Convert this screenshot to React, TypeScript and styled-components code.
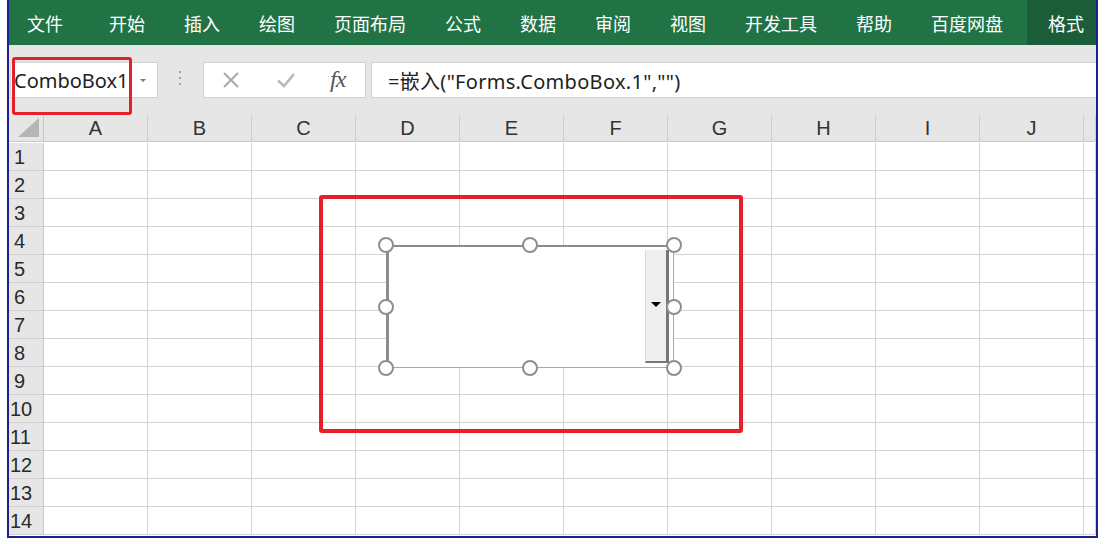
import React from 'react';
import styled, { createGlobalStyle } from 'styled-components';

const GlobalStyle = createGlobalStyle`
  html, body {
    margin: 0;
    padding: 0;
    background: #ffffff;
  }
  body {
    font-family: "Noto Sans", "Noto Sans CJK SC", sans-serif;
  }
`;

const GREEN = '#217346';
const GRID = '#d4d4d4';
const HEAD_BG = '#e6e6e6';

const Frame = styled.div`
  position: relative;
  margin-left: 7px;
  width: 1091px;
  height: 538px;
  box-sizing: border-box;
  border: 2px solid #1f1f8f;
  border-top: none;
  overflow: hidden;
  background: #ffffff;
`;

const Ribbon = styled.div`
  display: flex;
  align-items: stretch;
  gap: 39px;
  height: 45px;
  padding-left: 18px;
  background: ${GREEN};
  font-family: "Noto Sans CJK SC", sans-serif;
`;

const Tab = styled.div<{ $active?: boolean; $first?: boolean }>`
  display: flex;
  align-items: center;
  color: #ffffff;
  font-size: 18px;
  white-space: nowrap;
  margin-right: ${(p) => (p.$first ? '7px' : '0')};
  ${(p) =>
    p.$active &&
    `
    flex: 1;
    margin-left: -15px;
    padding-left: 21px;
    background: #1b5d39;
  `}
`;

const FormulaBar = styled.div`
  display: flex;
  align-items: flex-start;
  height: 70px;
  box-sizing: border-box;
  padding-top: 17px;
  padding-left: 1px;
  background: ${HEAD_BG};
`;

const NameBox = styled.div`
  display: flex;
  align-items: center;
  width: 148px;
  height: 36px;
  box-sizing: border-box;
  padding-left: 3px;
  background: #ffffff;
  border: 1px solid #d2d2d2;
  font-size: 20px;
  color: #222;
`;

const NameText = styled.span`
  flex: 1;
`;

const Caret = styled.span`
  width: 0;
  height: 0;
  margin-right: 11px;
  border-left: 3px solid transparent;
  border-right: 3px solid transparent;
  border-top: 3px solid #777;
`;

const Dots = styled.div`
  display: flex;
  flex-direction: column;
  gap: 4px;
  margin: 9px 22px 0 21px;
  span {
    width: 2px;
    height: 2px;
    background: #a3a3a3;
  }
`;

const FuncBox = styled.div`
  display: flex;
  align-items: center;
  width: 163px;
  height: 36px;
  box-sizing: border-box;
  padding-left: 18px;
  background: #ffffff;
  border: 1px solid #d2d2d2;
`;

const FuncIcon = styled.svg<{ $gap: number }>`
  margin-right: ${(p) => p.$gap}px;
  flex-shrink: 0;
`;

const Fx = styled.span`
  font-family: "Liberation Serif", serif;
  font-style: italic;
  font-size: 24px;
  color: #555;
  letter-spacing: -1px;
  margin-top: -2px;
`;

const FormulaInput = styled.div`
  flex: 1;
  display: flex;
  align-items: center;
  height: 36px;
  margin-left: 5px;
  box-sizing: border-box;
  padding-left: 16px;
  background: #ffffff;
  border: 1px solid #d2d2d2;
  border-right: none;
  font-size: 20px;
  letter-spacing: 0.3px;
  color: #222;
`;

const Grid = styled.div`
  display: grid;
  grid-template-columns: 35px repeat(10, 104px) 1fr;
  grid-auto-rows: 28px;
`;

const Corner = styled.div`
  height: 27px;
  box-sizing: border-box;
  background: ${HEAD_BG};
  border-right: 1px solid #c8c8c8;
  border-bottom: 1px solid #c8c8c8;
  display: flex;
  align-items: flex-end;
  justify-content: flex-end;
  padding: 0 4px 4px 0;
`;

const ColHead = styled.div`
  height: 27px;
  box-sizing: border-box;
  background: ${HEAD_BG};
  border-right: 1px solid #cfcfcf;
  border-bottom: 1px solid #c8c8c8;
  display: flex;
  align-items: center;
  justify-content: center;
  font-family: "Liberation Sans", sans-serif;
  font-size: 20px;
  color: #333;
`;

const RowHead = styled.div`
  box-sizing: border-box;
  background: ${HEAD_BG};
  border-right: 1px solid #c8c8c8;
  border-bottom: 1px solid #cfcfcf;
  display: flex;
  align-items: center;
  padding-left: 1px;
  padding-top: 1px;
  font-family: "Liberation Sans", sans-serif;
  font-size: 20px;
  color: #2a2a2a;
`;

const RowNum = styled.span<{ $two?: boolean }>`
  padding-left: ${(p) => (p.$two ? '0' : '4px')};
`;

const Cell = styled.div`
  box-sizing: border-box;
  border-right: 1px solid ${GRID};
  border-bottom: 1px solid ${GRID};
`;

const Callout = styled.div`
  position: absolute;
  box-sizing: border-box;
  border: 4px solid #e4202b;
  border-radius: 3px;
  pointer-events: none;
`;

const Combo = styled.div`
  position: absolute;
  left: 377px;
  top: 245px;
  width: 288px;
  height: 123px;
`;

const ComboBody = styled.div`
  position: absolute;
  inset: 0 0 0 0;
  box-sizing: border-box;
  background: #ffffff;
  border-top: 2px solid #8c8c8c;
  border-left: 3px solid #8c8c8c;
  border-right: 1px solid #a8a8a8;
  border-bottom: 1px solid #a8a8a8;
`;

const DropButton = styled.div`
  position: absolute;
  top: 3px;
  right: 4px;
  bottom: 4px;
  width: 24px;
  box-sizing: border-box;
  background: #efefef;
  border-left: 1px solid #dcdcdc;
  border-right: 3px solid #767676;
  border-bottom: 2px solid #767676;
  display: flex;
  align-items: center;
  justify-content: center;
  &::after {
    content: '';
    width: 0;
    height: 0;
    margin-top: -2px;
    border-left: 5px solid transparent;
    border-right: 5px solid transparent;
    border-top: 5px solid #000;
  }
`;

const Handle = styled.div<{ $x: number; $y: number }>`
  position: absolute;
  left: ${(p) => p.$x - 8}px;
  top: ${(p) => p.$y - 8}px;
  width: 16px;
  height: 16px;
  box-sizing: border-box;
  border-radius: 50%;
  border: 2px solid #8e8e8e;
  background: #ffffff;
`;

const tabs = ['文件', '开始', '插入', '绘图', '页面布局', '公式', '数据', '审阅', '视图', '开发工具', '帮助', '百度网盘'];
const cols = ['A', 'B', 'C', 'D', 'E', 'F', 'G', 'H', 'I', 'J', ''];
const rows = Array.from({ length: 14 }, (_, i) => i + 1);
const handles: [number, number][] = [
  [0, 0], [144, 0], [288, 0],
  [0, 62], [288, 62],
  [0, 123], [144, 123], [288, 123],
];

const App: React.FC = () => {
  return (
    <>
      <GlobalStyle />
      <Frame>
        <Ribbon>
          {tabs.map((t, i) => (
            <Tab key={t} $first={i === 0}>{t}</Tab>
          ))}
          <Tab $active>格式</Tab>
        </Ribbon>

        <FormulaBar>
          <NameBox>
            <NameText>ComboBox1</NameText>
            <Caret />
          </NameBox>
          <Dots><span /><span /><span /></Dots>
          <FuncBox>
            <FuncIcon $gap={36} width="18" height="18" viewBox="0 0 18 18">
              <path d="M2 2 L16 16 M16 2 L2 16" stroke="#aaaaaa" strokeWidth="2" fill="none" />
            </FuncIcon>
            <FuncIcon $gap={34} width="20" height="18" viewBox="0 0 20 18">
              <path d="M2 9.5 L8 15 L18 3" stroke="#b8b8b8" strokeWidth="2.6" fill="none" />
            </FuncIcon>
            <Fx>fx</Fx>
          </FuncBox>
          <FormulaInput>=嵌入("Forms.ComboBox.1","")</FormulaInput>
        </FormulaBar>

        <Grid>
          <Corner>
            <svg width="21" height="19" viewBox="0 0 21 19">
              <polygon points="21,0 21,19 0,19" fill="#b5b5b5" />
            </svg>
          </Corner>
          {cols.map((c, i) => (
            <ColHead key={i}>{c}</ColHead>
          ))}
          {rows.map((r) => (
            <React.Fragment key={r}>
              <RowHead>
                <RowNum $two={r >= 10}>{r}</RowNum>
              </RowHead>
              {cols.map((_, i) => (
                <Cell key={i} />
              ))}
            </React.Fragment>
          ))}
        </Grid>

        <Callout style={{ left: 3, top: 57, width: 120, height: 58, borderWidth: 3 }} />
        <Combo>
          <ComboBody>
            <DropButton />
          </ComboBody>
          {handles.map(([x, y], i) => (
            <Handle key={i} $x={x} $y={y} />
          ))}
        </Combo>
        <Callout style={{ left: 310, top: 195, width: 424, height: 238 }} />
      </Frame>
    </>
  );
};

export default App;
